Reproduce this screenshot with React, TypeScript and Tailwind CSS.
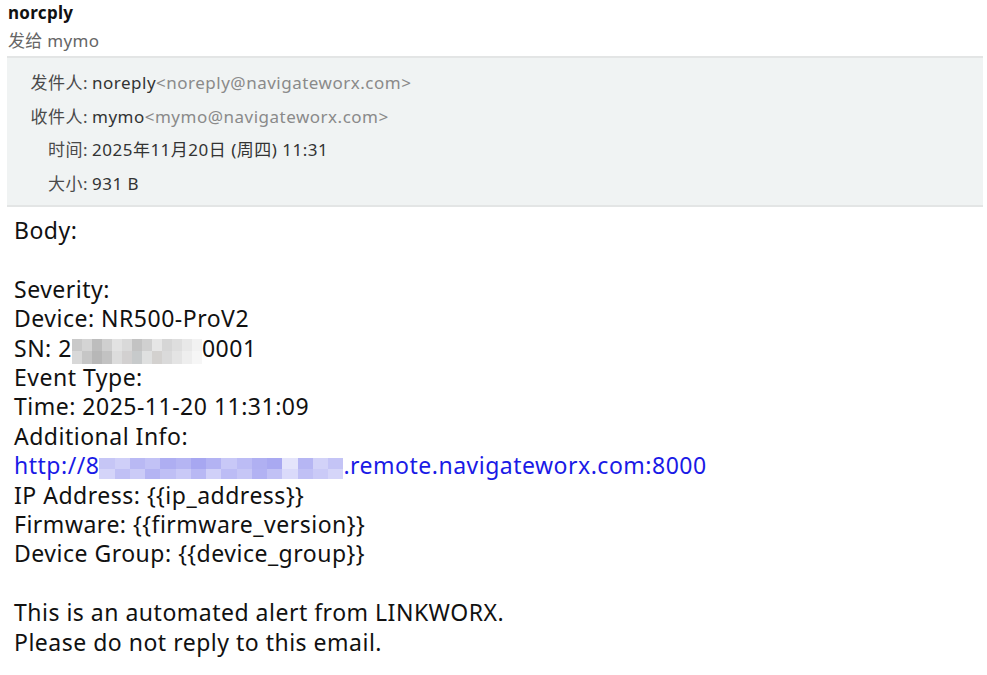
import React from 'react';

const sans = '[font-family:"Noto_Sans","Noto_Sans_CJK_SC",sans-serif]';

// mosaic cells for the blurred serial number and link
const snTop = ['#c9c9c9', '#d4d4d4', '#bdbdbd', '#cfcfcf', '#e2e2e2', '#d9d9d9', '#c3c3c3', '#d0d0d0', '#e6e6e6', '#d6d6d6', '#dedede', '#e8e8e8', '#f2f2f2'];
const snBot = ['#d8d8d8', '#c6c6c6', '#b7b7b7', '#c2c2c2', '#dcdcdc', '#d2d0d0', '#c7cacb', '#dfe0e0', '#d3d1cf', '#dadada', '#e4e4e4', '#eeeeee', '#f6f6f6'];
const urlTop = ['#c6c6f6', '#cfcff8', '#b9b9f4', '#c2c2f6', '#aeaef2', '#b5b5f3', '#a7a7f1', '#b3b3f3', '#c8c8f7', '#bcbcf5', '#b0b0f2', '#a9a9f1', '#e4e4fb', '#b6b6f3', '#d2d2f8', '#c4c4f6'];
const urlBot = ['#d4d4f9', '#c0c0f5', '#cbcbf7', '#b4b4f3', '#bfbff5', '#c9c9f7', '#b8b8f4', '#d0d0f8', '#bcbcf5', '#c6c6f6', '#b2b2f3', '#c1c1f5', '#dadafa', '#c0c0f5', '#cacaf7', '#d5d5f9'];

function Mosaic({ top, bottom, width, pos }: { top: string[]; bottom: string[]; width: string; pos: string }) {
  return (
    <span className={`relative inline-block ${width}`}>
      &nbsp;
      <span className={`absolute left-0 right-0 flex flex-col ${pos}`}>
        <span className="flex flex-1">
          {top.map((c, i) => (
            <span key={i} className="flex-1" style={{ background: c }} />
          ))}
        </span>
        <span className="flex flex-1">
          {bottom.map((c, i) => (
            <span key={i} className="flex-1" style={{ background: c }} />
          ))}
        </span>
      </span>
    </span>
  );
}

function MetaRow({ label, children }: { label: string; children: React.ReactNode }) {
  return (
    <div className="flex h-[33.5px] items-center">
      <span className="w-[81px] text-right text-[#4a4a4a]">{label}:</span>
      <span className="ml-[4px] text-[#333]">{children}</span>
    </div>
  );
}

export default function App() {
  return (
    <div className={`min-h-screen w-[987px] bg-white ${sans}`}>
      {/* 发件信息 */}
      <div className="pl-[8px] tracking-[0.3px]">
        <div className="text-[17px] font-bold leading-[26px] text-[#111]">norcply</div>
        <div className="text-[17px] leading-[29px] text-[#666]">发给 mymo</div>
      </div>

      <div className="ml-[7px] mr-[4px] mt-[1px] border-y-2 border-[#e3e5e5] bg-[#f0f3f3] pt-[8px] pb-[5px] text-[17px] tracking-[0.5px]">
        <MetaRow label="发件人">
          noreply<span className="text-[#8a8a8a]">&lt;noreply@navigateworx.com&gt;</span>
        </MetaRow>
        <MetaRow label="收件人">
          mymo<span className="text-[#8a8a8a]">&lt;mymo@navigateworx.com&gt;</span>
        </MetaRow>
        <MetaRow label="时间">2025年11月20日 (周四) 11:31</MetaRow>
        <MetaRow label="大小">931 B</MetaRow>
      </div>

      {/* 正文 */}
      <div className="pl-[14px] pt-[9px] text-[23px] leading-[29.4px] tracking-[0.5px] text-[#111]">
        <div>Body:</div>
        <div>&nbsp;</div>
        <div>Severity:</div>
        <div>Device: NR500-ProV2</div>
        <div>
          SN: 2
          <Mosaic top={snTop} bottom={snBot} width="w-[130px]" pos="top-[5px] h-[25px]" />
          0001
        </div>
        <div>Event Type:</div>
        <div>Time: 2025-11-20 11:31:09</div>
        <div>Additional Info:</div>
        <div className="text-[#1a1ae6]">
          http://8
          <Mosaic top={urlTop} bottom={urlBot} width="w-[244px]" pos="top-[7px] h-[21px]" />
          .remote.navigateworx.com:8000
        </div>
        <div>IP Address: {'{{ip_address}}'}</div>
        <div>Firmware: {'{{firmware_version}}'}</div>
        <div>Device Group: {'{{device_group}}'}</div>
        <div>&nbsp;</div>
        <div>This is an automated alert from LINKWORX.</div>
        <div>Please do not reply to this email.</div>
      </div>
    </div>
  );
}
